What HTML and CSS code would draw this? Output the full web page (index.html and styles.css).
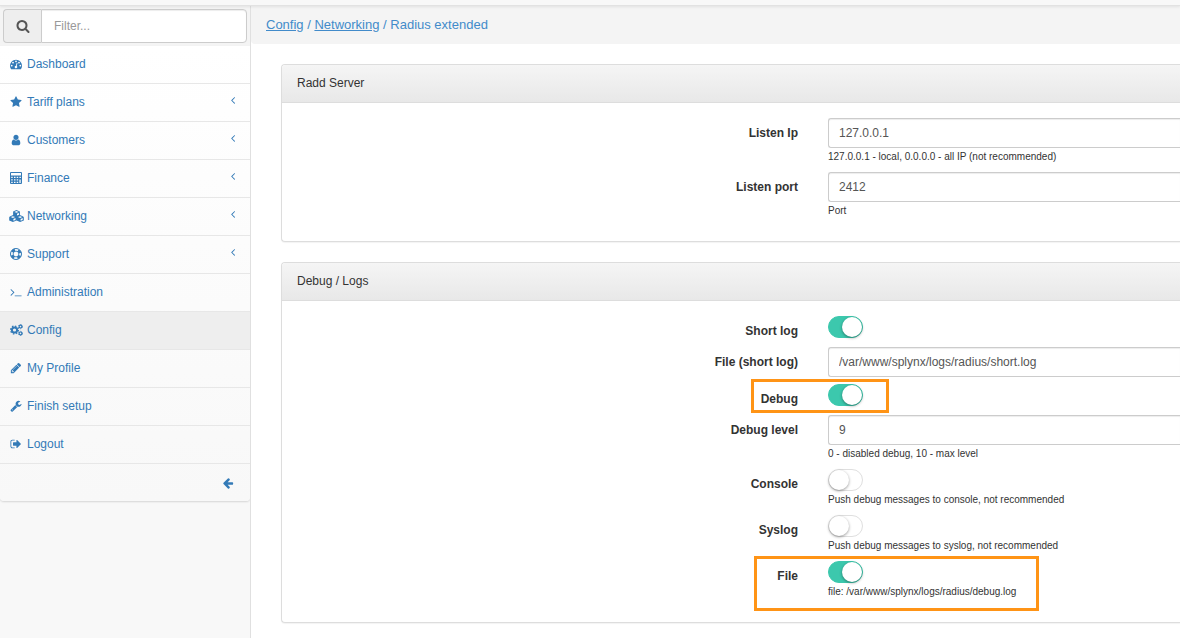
FILE: index.html
```html
<!DOCTYPE html>
<html lang="en">
<head>
<meta charset="utf-8">
<title>Radius extended</title>
<link rel="stylesheet" href="styles.css">
</head>
<body>
<header class="topbar"></header>
<div class="layout">
  <aside class="sidebar">
    <form class="search">
      <button class="search-btn" type="button" aria-label="Search"><svg class="icon icon-search" viewBox="0 0 1792 1792"><path d="M1216 832q0-185-131.500-316.500t-316.500-131.500-316.500 131.500-131.500 316.500 131.500 316.500 316.500 131.500 316.500-131.500 131.500-316.500zm512 832q0 52-38 90t-90 38q-54 0-90-38l-343-342q-179 124-399 124-143 0-273.500-55.500t-225-150-150-225-55.500-273.500 55.500-273.500 150-225 225-150 273.500-55.500 273.500 55.500 225 150 150 225 55.500 273.500q0 220-124 399l343 343q37 37 37 90z"/></svg></button>
      <input class="search-input" type="text" placeholder="Filter..." aria-label="Filter">
    </form>
    <nav class="menu">
      <a class="item" href="#"><span class="ico"><svg class="icon" viewBox="0 0 1792 1792"><path d="M384 1152q0-53-37.500-90.500t-90.500-37.500-90.500 37.500-37.500 90.500 37.500 90.500 90.500 37.500 90.500-37.500 37.500-90.500zm192-448q0-53-37.500-90.500t-90.500-37.500-90.500 37.500-37.500 90.500 37.500 90.500 90.500 37.500 90.500-37.500 37.500-90.500zm428 481l101-382q6-26-7.500-48.500t-38.500-29.500-48 6.500-30 39.500l-101 382q-60 5-107 43.500t-63 98.500q-20 77 20 146t117 89 146-20 89-117q16-60-6-117t-72-91zm660-33q0-53-37.500-90.500t-90.500-37.500-90.500 37.500-37.500 90.500 37.500 90.500 90.500 37.500 90.500-37.500 37.500-90.500zm-640-640q0-53-37.500-90.500t-90.500-37.500-90.500 37.500-37.500 90.500 37.500 90.500 90.500 37.500 90.500-37.500 37.500-90.500zm448 192q0-53-37.500-90.500t-90.500-37.500-90.500 37.500-37.500 90.500 37.500 90.500 90.500 37.500 90.500-37.500 37.500-90.500zm320 448q0 261-141 483-19 29-54 29h-1402q-35 0-54-29-141-221-141-483 0-182 71-348t191-286 286-191 348-71 348 71 286 191 191 286 71 348z"/></svg></span>Dashboard</a>
      <a class="item" href="#"><span class="ico"><svg class="icon" viewBox="0 0 1792 1792"><path d="M1728 647q0 22-26 48l-363 354 86 500q1 7 1 20 0 21-10.500 35.500t-30.500 14.500q-19 0-40-12l-449-236-449 236q-22 12-40 12-21 0-31.500-14.500t-10.500-35.500q0-6 2-20l86-500-364-354q-25-27-25-48 0-37 56-46l502-73 225-455q19-41 49-41t49 41l225 455 502 73q56 9 56 46z"/></svg></span>Tariff plans<svg class="icon chevron" viewBox="0 0 1792 1792"><path d="M1203 544q0 13-10 23l-393 393 393 393q10 10 10 23t-10 23l-50 50q-10 10-23 10t-23-10l-466-466q-10-10-10-23t10-23l466-466q10-10 23-10t23 10l50 50q10 10 10 23z"/></svg></a>
      <a class="item" href="#"><span class="ico"><svg class="icon" viewBox="0 0 1792 1792"><path d="M1536 1399q0 109-62.500 187t-150.500 78h-854q-88 0-150.500-78t-62.500-187q0-85 8.500-160.500t31.500-152 58.500-131 94-89 134.500-34.500q131 128 313 128t313-128q76 0 134.500 34.500t94 89 58.500 131 31.500 152 8.500 160.500zm-256-887q0 159-112.500 271.500t-271.500 112.500-271.500-112.500-112.500-271.500 112.500-271.500 271.500-112.500 271.500 112.500 112.500 271.500z"/></svg></span>Customers<svg class="icon chevron" viewBox="0 0 1792 1792"><path d="M1203 544q0 13-10 23l-393 393 393 393q10 10 10 23t-10 23l-50 50q-10 10-23 10t-23-10l-466-466q-10-10-10-23t10-23l466-466q10-10 23-10t23 10l50 50q10 10 10 23z"/></svg></a>
      <a class="item" href="#"><span class="ico"><svg class="icon" viewBox="0 0 12 12"><path fill-rule="evenodd" d="M1 0h10a1 1 0 0 1 1 1v10a1 1 0 0 1-1 1H1a1 1 0 0 1-1-1V1a1 1 0 0 1 1-1zM1 1v2.500h10V1zM1.200 4.800v1.300h1.500V4.800zM4 4.800v1.300h1.500V4.800zM6.700 4.800v1.300h1.500V4.800zM9.400 4.800v1.300h1.500V4.800zM1.200 7.200v1.300h1.500V7.200zM4 7.200v1.300h1.500V7.200zM6.700 7.200v1.300h1.500V7.200zM1.200 9.700v1.300h1.500V9.700zM4 9.700v1.300h1.500V9.700zM6.700 9.700v1.300h1.500V9.700zM9.400 7.500v3.400h1.300V7.500z"/></svg></span>Finance<svg class="icon chevron" viewBox="0 0 1792 1792"><path d="M1203 544q0 13-10 23l-393 393 393 393q10 10 10 23t-10 23l-50 50q-10 10-23 10t-23-10l-466-466q-10-10-10-23t10-23l466-466q10-10 23-10t23 10l50 50q10 10 10 23z"/></svg></a>
      <a class="item" href="#"><span class="ico"><svg class="icon icon-wide" viewBox="0 0 15 12"><path fill-rule="evenodd" d="M7.500 0l3.400 1.400v3.700l3.300 1.400.6.700v3.200l-3.700 1.600-3.600-1.600L3.900 12 .2 10.400V7.200l.6-.7 3.300-1.400V1.400zM7.500 1L5.300 1.900l2.200.9 2.200-.9zM8 3.700v1.900l2-.8V2.900zM3.900 6.200l-2.200.9 2.200.9 2.200-.9zM4.400 8.900v1.900l2.100-.9V8zM11.100 6.200l-2.200.9 2.200.9 2.200-.9zM11.600 8.900v1.900l2.100-.9V8z"/></svg></span>Networking<svg class="icon chevron" viewBox="0 0 1792 1792"><path d="M1203 544q0 13-10 23l-393 393 393 393q10 10 10 23t-10 23l-50 50q-10 10-23 10t-23-10l-466-466q-10-10-10-23t10-23l466-466q10-10 23-10t23 10l50 50q10 10 10 23z"/></svg></a>
      <a class="item" href="#"><span class="ico"><svg class="icon" viewBox="0 0 12 12"><g fill="none" stroke="currentColor"><circle cx="6" cy="6" r="5.500" stroke-width="1"/><circle cx="6" cy="6" r="2.900" stroke-width=".9"/><circle cx="6" cy="6" r="4.200" stroke-width="2.800" stroke-dasharray="3.300 3.300" stroke-dashoffset="-1.650"/></g></svg></span>Support<svg class="icon chevron" viewBox="0 0 1792 1792"><path d="M1203 544q0 13-10 23l-393 393 393 393q10 10 10 23t-10 23l-50 50q-10 10-23 10t-23-10l-466-466q-10-10-10-23t10-23l466-466q10-10 23-10t23 10l50 50q10 10 10 23z"/></svg></a>
      <a class="item" href="#"><span class="ico"><svg class="icon" viewBox="0 0 1792 1792"><path d="M649 983l-466 466q-10 10-23 10t-23-10l-50-50q-10-10-10-23t10-23l393-393-393-393q-10-10-10-23t10-23l50-50q10-10 23-10t23 10l466 466q10 10 10 23t-10 23zm1079 457v64q0 14-9 23t-23 9h-960q-14 0-23-9t-9-23v-64q0-14 9-23t23-9h960q14 0 23 9t9 23z"/></svg></span>Administration</a>
      <a class="item active" href="#"><span class="ico"><svg class="icon icon-gears" viewBox="0 0 13 12"><g fill="none" stroke="currentColor"><circle cx="4.500" cy="6" r="2.600" stroke-width="2"/><circle cx="4.500" cy="6" r="3.900" stroke-width="1.300" stroke-dasharray="1.530 1.530"/><circle cx="10.500" cy="2.600" r="1.400" stroke-width="1.200"/><circle cx="10.500" cy="2.600" r="2.100" stroke-width=".8" stroke-dasharray="1.100 1.100"/><circle cx="10.500" cy="9.400" r="1.400" stroke-width="1.200"/><circle cx="10.500" cy="9.400" r="2.100" stroke-width=".8" stroke-dasharray="1.100 1.100"/></g></svg></span>Config</a>
      <a class="item" href="#"><span class="ico"><svg class="icon" viewBox="0 0 1792 1792"><path d="M491 1536l91-91-235-235-91 91v107h128v128h107zm523-928q0-22-22-22-10 0-17 7l-542 542q-7 7-7 17 0 22 22 22 10 0 17-7l542-542q7-7 7-17zm-54-192l416 416-832 832h-416v-416zm683 96q0 53-37 90l-166 166-416-416 166-165q36-38 90-38 53 0 91 38l235 234q37 39 37 91z"/></svg></span>My Profile</a>
      <a class="item" href="#"><span class="ico"><svg class="icon" viewBox="0 0 1792 1792"><path d="M448 1472q0-26-19-45t-45-19-45 19-19 45 19 45 45 19 45-19 19-45zm644-420l-682 682q-37 37-90 37-52 0-91-37l-106-108q-38-36-38-90 0-53 38-91l681-681q39 98 114.500 173.500t173.500 114.500zm634-435q0 39-23 106-47 134-164.500 217.500t-258.500 83.500q-185 0-316.500-131.500t-131.500-316.500 131.500-316.500 316.500-131.500q58 0 121.500 16.500t107.500 46.500q16 11 16 28t-16 28l-293 169v224l193 107q5-3 79-48.500t135.500-81 70.500-35.500q15 0 23.500 10t8.500 25z"/></svg></span>Finish setup</a>
      <a class="item" href="#"><span class="ico"><svg class="icon" viewBox="0 0 1792 1792"><path d="M704 1440q0 4 1 20t.5 26.500-3 23.500-10 19.500-20.500 6.500h-320q-119 0-203.500-84.500t-84.500-203.500v-704q0-119 84.500-203.500t203.500-84.500h320q13 0 22.500 9.500t9.500 22.500q0 4 1 20t.5 26.500-3 23.500-10 19.500-20.500 6.500h-320q-66 0-113 47t-47 113v704q0 66 47 113t113 47h312l11.500 1 11.500 3 8 5.500 7 9 2 13.500zm928-544q0 26-19 45l-544 544q-19 19-45 19t-45-19-19-45v-288h-448q-26 0-45-19t-19-45v-384q0-26 19-45t45-19h448v-288q0-26 19-45t45-19 45 19l544 544q19 19 19 45z"/></svg></span>Logout</a>
      <button class="item collapse" type="button" aria-label="Collapse menu"><svg class="icon" viewBox="0 0 1792 1792"><path d="M1664 896v128q0 53-32.500 90.500t-84.500 37.500h-704l293 294q38 36 38 90t-38 90l-75 76q-37 37-90 37-52 0-91-37l-651-652q-37-37-37-90 0-52 37-91l651-650q38-38 91-38 52 0 90 38l75 74q38 38 38 91t-38 91l-293 293h704q52 0 84.500 37.500t32.500 90.500z"/></svg></button>
    </nav>
  </aside>
  <main class="content">
    <div class="breadcrumb"><a href="#">Config</a> / <a href="#">Networking</a> / Radius extended</div>
    <div class="panels">
      <section class="panel">
        <h2 class="panel-title">Radd Server</h2>
        <div class="panel-body">
          <div class="row"><label class="label" for="ip">Listen Ip</label><div class="field"><input class="text" id="ip" type="text" value="127.0.0.1"><p class="help">127.0.0.1 - local, 0.0.0.0 - all IP (not recommended)</p></div></div>
          <div class="row"><label class="label" for="port">Listen port</label><div class="field"><input class="text" id="port" type="text" value="2412"><p class="help">Port</p></div></div>
        </div>
      </section>
      <section class="panel">
        <h2 class="panel-title">Debug / Logs</h2>
        <div class="panel-body">
          <div class="row row-switch"><label class="label" for="short">Short log</label><div class="field"><input class="switch" id="short" type="checkbox" checked></div></div>
          <div class="row row-text"><label class="label" for="shortfile">File (short log)</label><div class="field"><input class="text" id="shortfile" type="text" value="/var/www/splynx/logs/radius/short.log"></div></div>
          <div class="row row-switch"><label class="label" for="debug">Debug</label><div class="field"><input class="switch" id="debug" type="checkbox" checked><span class="mark mark-debug"></span></div></div>
          <div class="row"><label class="label" for="level">Debug level</label><div class="field"><input class="text" id="level" type="text" value="9"><p class="help">0 - disabled debug, 10 - max level</p></div></div>
          <div class="row"><label class="label" for="console">Console</label><div class="field"><input class="switch" id="console" type="checkbox"><p class="help">Push debug messages to console, not recommended</p></div></div>
          <div class="row"><label class="label" for="syslog">Syslog</label><div class="field"><input class="switch" id="syslog" type="checkbox"><p class="help">Push debug messages to syslog, not recommended</p></div></div>
          <div class="row"><label class="label" for="file">File</label><div class="field"><input class="switch" id="file" type="checkbox" checked><p class="help">file: /var/www/splynx/logs/radius/debug.log</p><span class="mark mark-file"></span></div></div>
        </div>
      </section>
    </div>
  </main>
</div>
</body>
</html>
```
FILE: styles.css
```css
* { box-sizing: border-box; }

body {
  margin: 0;
  min-height: 100vh;
  display: flex;
  flex-direction: column;
  background: #f8f8f8;
  color: #333;
  font: 12px/16px "Liberation Sans", Arial, sans-serif;
}

.topbar {
  position: relative;
  z-index: 1;
  height: 6px;
  background: #f8f8f8;
  border-bottom: 1px solid #e2e2e2;
  box-shadow: 0 1px 3px rgba(0, 0, 0, .08);
}

.layout { flex: 1; display: flex; }

.sidebar { width: 250px; flex: none; }

.search {
  display: flex;
  padding: 3px;
  background: #f4f4f4;
}

.search-btn {
  width: 38px;
  height: 34px;
  padding: 0;
  display: flex;
  align-items: center;
  justify-content: center;
  border: 1px solid #ccc;
  border-right: 0;
  border-radius: 4px 0 0 4px;
  background: #eee;
  color: #555;
}

.search-input {
  flex: 1;
  min-width: 0;
  height: 34px;
  padding: 0 12px;
  border: 1px solid #ccc;
  border-radius: 0 4px 4px 0;
  background: #fff;
  color: #555;
  font: inherit;
  box-shadow: inset 0 1px 1px rgba(0, 0, 0, .075);
}

.search-input::placeholder { color: #999; opacity: 1; }

.icon { display: block; width: 12px; height: 12px; flex: none; fill: currentColor; }
.icon-search { width: 14px; height: 14px; }
.icon-wide { width: 15px; }
.icon-gears { width: 13px; }

.menu {
  background: linear-gradient(#fff, #f8f8f8);
  border-radius: 0 0 4px 4px;
  box-shadow: 0 1px 2px rgba(0, 0, 0, .14);
}

.item {
  display: flex;
  align-items: center;
  gap: 3px;
  width: 100%;
  height: 38px;
  padding: 0 11px 2px 8px;
  border: 0;
  border-bottom: 1px solid #e7e7e7;
  background: none;
  color: #337ab7;
  text-decoration: none;
}

.item.active { background: #eee; }

.ico { width: 16px; display: flex; justify-content: center; }

.chevron { margin: 0 0 4px auto; }

.collapse { height: 37px; justify-content: flex-end; padding: 0 16px 0 0; border-bottom: 0; }

.content {
  flex: 1;
  min-width: 0;
  background: #fff;
  border-left: 1px solid #e0e0e0;
  overflow: hidden;
}

.breadcrumb {
  padding: 11px 15px;
  background: #f4f4f4;
  border-radius: 0 0 0 4px;
  color: #428bca;
  font-size: 13px;
}

.breadcrumb a { color: inherit; text-decoration: underline; }

.panels {
  display: flex;
  flex-direction: column;
  gap: 20px;
  padding: 20px 0 15px 30px;
}

.panel {
  border: 1px solid #ddd;
  border-right: 0;
  border-radius: 4px 0 0 4px;
  background: #fff;
  box-shadow: 0 1px 1px rgba(0, 0, 0, .05);
}

.panel-title {
  margin: 0;
  padding: 10px 15px 11px;
  border-bottom: 1px solid #ddd;
  border-radius: 3px 0 0 0;
  background: linear-gradient(#f5f5f5, #e8e8e8);
  font-size: 12px;
  font-weight: 400;
}

.panel-body { padding: 15px 0; }

.row {
  display: grid;
  grid-template-columns: 516fr 352fr;
  column-gap: 30px;
  margin-bottom: 10px;
}

.row-switch { height: 22px; margin-bottom: 9px; }
.row-text { margin-bottom: 7px; }

.label { padding-top: 7px; text-align: right; font-weight: 700; }

.field { position: relative; min-width: 0; }

.text {
  display: block;
  width: 100%;
  height: 30px;
  padding: 0 10px;
  border: 1px solid #ccc;
  border-right: 0;
  border-radius: 3px 0 0 3px;
  background: #fff;
  color: #555;
  font: inherit;
  box-shadow: inset 0 1px 1px rgba(0, 0, 0, .075);
}

.help {
  margin: 0 0 -2px;
  padding-top: 2px;
  font-size: 10px;
  line-height: 14px;
  white-space: nowrap;
}

.switch {
  appearance: none;
  display: block;
  width: 35px;
  height: 22px;
  margin: 0;
  border: 1px solid #dfdfdf;
  border-radius: 11px;
  background: #fff;
}

.switch::before {
  content: "";
  display: block;
  width: 20px;
  height: 20px;
  border-radius: 50%;
  background: #fff;
  box-shadow: 0 1px 3px rgba(0, 0, 0, .4);
}

.switch:checked { background: #3cc8ad; border-color: #3cc8ad; }
.switch:checked::before { margin-left: 13px; }

.mark {
  position: absolute;
  top: -5px;
  border: 3px solid #ff9416;
  pointer-events: none;
}

.mark-debug { left: -77px; width: 138px; height: 34px; }
.mark-file { left: -74px; width: 285px; height: 55px; }
```
